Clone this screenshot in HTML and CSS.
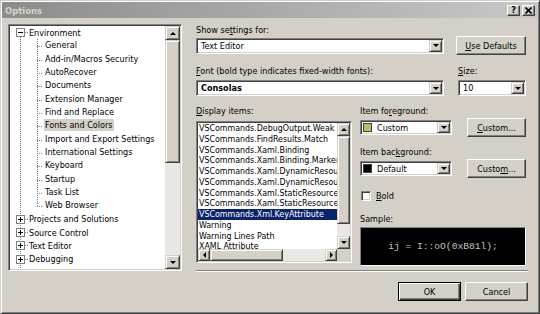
FILE: index.html
```html
<!DOCTYPE html>
<html lang="en">
<head>
    <meta charset="UTF-8">
    <title>Options</title>
    <link rel="stylesheet" href="styles.css">
</head>
<body>

<div class="window">
    <div class="titlebar">
        <span class="title">Options</span>
        <span class="cap-btn help">?</span>
        <span class="cap-btn close">
            <svg width="7" height="7" viewBox="0 0 7 7"><path d="M0.5 0.5L6.5 6.5M6.5 0.5L0.5 6.5" stroke="#000" stroke-width="1.6"/></svg>
        </span>
    </div>

    <div class="main">
        <!-- category tree -->
        <div class="tree sunken">
            <div class="tree-items">
                <div class="root">
                    <svg class="exp" width="9" height="9"><rect x="0.5" y="0.5" width="8" height="8" fill="#fff" stroke="#808080"/><path d="M2 4.5h5" stroke="#000"/></svg>
                    <span class="tick"></span><span>Environment</span>
                </div>
                <div class="children">
                    <div class="leaf">General</div>
                    <div class="leaf">Add-in/Macros Security</div>
                    <div class="leaf">AutoRecover</div>
                    <div class="leaf">Documents</div>
                    <div class="leaf">Extension Manager</div>
                    <div class="leaf">Find and Replace</div>
                    <div class="leaf"><span class="picked">Fonts and Colors</span></div>
                    <div class="leaf">Import and Export Settings</div>
                    <div class="leaf">International Settings</div>
                    <div class="leaf">Keyboard</div>
                    <div class="leaf">Startup</div>
                    <div class="leaf">Task List</div>
                    <div class="leaf">Web Browser</div>
                </div>
                <div class="root">
                    <svg class="exp" width="9" height="9"><rect x="0.5" y="0.5" width="8" height="8" fill="#fff" stroke="#808080"/><path d="M2 4.5h5M4.5 2v5" stroke="#000"/></svg>
                    <span class="tick"></span><span>Projects and Solutions</span>
                </div>
                <div class="root">
                    <svg class="exp" width="9" height="9"><rect x="0.5" y="0.5" width="8" height="8" fill="#fff" stroke="#808080"/><path d="M2 4.5h5M4.5 2v5" stroke="#000"/></svg>
                    <span class="tick"></span><span>Source Control</span>
                </div>
                <div class="root">
                    <svg class="exp" width="9" height="9"><rect x="0.5" y="0.5" width="8" height="8" fill="#fff" stroke="#808080"/><path d="M2 4.5h5M4.5 2v5" stroke="#000"/></svg>
                    <span class="tick"></span><span>Text Editor</span>
                </div>
                <div class="root">
                    <svg class="exp" width="9" height="9"><rect x="0.5" y="0.5" width="8" height="8" fill="#fff" stroke="#808080"/><path d="M2 4.5h5M4.5 2v5" stroke="#000"/></svg>
                    <span class="tick"></span><span>Debugging</span>
                </div>
            </div>
            <div class="vscroll tree-scroll">
                <div class="sb-btn up"></div>
                <div class="sb-thumb"></div>
                <div class="sb-track"></div>
                <div class="sb-btn down"></div>
            </div>
        </div>

        <div class="settings">
            <div class="label first">Show se<u>t</u>tings for:</div>
            <div class="row tall">
                <div class="combo wide"><span class="combo-text">Text Editor</span><span class="drop"></span></div>
                <div class="btn defaults"><u>U</u>se Defaults</div>
            </div>

            <div class="row labels">
                <div class="label font-label"><u>F</u>ont (bold type indicates fixed-width fonts):</div>
                <div class="label"><u>S</u>ize:</div>
            </div>
            <div class="row combos">
                <div class="combo wide"><span class="combo-text bold">Consolas</span><span class="drop"></span></div>
                <div class="combo size"><span class="combo-text">10</span><span class="drop"></span></div>
            </div>

            <div class="middle">
                <div class="items-col">
                    <div class="label"><u>D</u>isplay items:</div>
                    <div class="listbox sunken">
                        <div class="list-items">
                            <div>VSCommands.DebugOutput.Weak</div>
                            <div>VSCommands.FindResults.Match</div>
                            <div>VSCommands.Xaml.Binding</div>
                            <div>VSCommands.Xaml.Binding.Marker</div>
                            <div>VSCommands.Xaml.DynamicResou</div>
                            <div>VSCommands.Xaml.DynamicResou</div>
                            <div>VSCommands.Xaml.StaticResource</div>
                            <div>VSCommands.Xaml.StaticResource</div>
                            <div class="selected">VSCommands.Xml.KeyAttribute</div>
                            <div>Warning</div>
                            <div>Warning Lines Path</div>
                            <div>XAML Attribute</div>
                        </div>
                        <div class="vscroll list-vscroll">
                            <div class="sb-btn up"></div>
                            <div class="sb-thumb"></div>
                            <div class="sb-track"></div>
                            <div class="sb-btn down"></div>
                        </div>
                        <div class="hscroll">
                            <div class="sb-btn left"></div>
                            <div class="sb-thumb"></div>
                            <div class="sb-track"></div>
                            <div class="sb-btn right"></div>
                        </div>
                        <div class="corner"></div>
                    </div>
                </div>

                <div class="color-col">
                    <div class="label">Item fo<u>r</u>eground:</div>
                    <div class="row tall">
                        <div class="combo small"><span class="swatch olive"></span><span class="combo-text">Custom</span><span class="drop"></span></div>
                        <div class="btn custom"><u>C</u>ustom...</div>
                    </div>
                    <div class="label spaced">Item bac<u>k</u>ground:</div>
                    <div class="row tall">
                        <div class="combo small"><span class="swatch black"></span><span class="combo-text">Default</span><span class="drop"></span></div>
                        <div class="btn custom">Custo<u>m</u>...</div>
                    </div>
                    <div class="check-row">
                        <span class="checkbox"></span><span><u>B</u>old</span>
                    </div>
                    <div class="label sample-label">Sample:</div>
                    <div class="sample">ij = I::oO(0xB81l);</div>
                </div>
            </div>

            <div class="separator"></div>

            <div class="actions">
                <div class="btn action default">OK</div>
                <div class="btn action">Cancel</div>
            </div>
        </div>
    </div>
</div>

</body>
</html>
```

FILE: styles.css
```css
* {
    box-sizing: border-box;
}

body {
    margin: 0;
    font-family: "DejaVu Sans Condensed", "DejaVu Sans", sans-serif;
    font-stretch: condensed;
    font-size: 9px;
    color: #000;
}

u {
    text-decoration-thickness: 1px;
    text-underline-offset: 1px;
}

.window {
    width: 540px;
    height: 314px;
    background-color: #d4d0c8; /* classic dialog gray */
    border: 1px solid;
    border-color: #d4d0c8 #404040 #404040 #d4d0c8;
    padding: 1px;
    box-shadow: inset 1px 1px #fff, inset -1px -1px #808080;
}

/* title bar (inactive) */
.titlebar {
    height: 16px;
    display: flex;
    align-items: center;
    padding: 0 3px 0 3px;
    background: linear-gradient(to right, #8c8c8c, #c8c8c8);
}

.title {
    font-weight: bold;
    color: #d8d4cc;
    font-size: 9.4px;
}

.cap-btn {
    width: 13px;
    height: 11px;
    display: flex;
    justify-content: center;
    align-items: center;
    background-color: #d4d0c8;
    border: 1px solid;
    border-color: #fff #404040 #404040 #fff;
    box-shadow: inset -1px -1px #808080;
    font-weight: bold;
    font-size: 9px;
    line-height: 9px;
}

.cap-btn.help {
    margin-left: auto;
}

.cap-btn.close {
    margin-left: 2px;
}

.main {
    display: flex;
    padding: 6px 0 0 6px;
}

.sunken {
    border: 1px solid;
    border-color: #808080 #fff #fff #808080;
    padding: 1px;
    box-shadow: inset 1px 1px #404040, inset -1px -1px #d4d0c8;
    background-color: #fff;
}

/* tree */
.tree {
    width: 174px;
    height: 247px;
    display: flex;
}

.tree-items {
    flex: 1;
    overflow: hidden;
    white-space: nowrap;
    background-image: repeating-linear-gradient(#808080 0 1px, transparent 1px 2px);
    background-size: 1px 100%;
    background-position: 10px 7px;
    background-repeat: no-repeat;
}

.root {
    height: 13.33px;
    display: flex;
    align-items: center;
}

.exp {
    margin-left: 6px;
    flex-shrink: 0;
}

.tick {
    width: 3px;
    height: 1px;
    margin-right: 1px;
    background-image: repeating-linear-gradient(to right, #808080 0 1px, transparent 1px 2px);
}

.children {
    background-image: repeating-linear-gradient(#808080 0 1px, transparent 1px 2px);
    background-size: 1px calc(100% - 6px);
    background-position: 27px 0;
    background-repeat: no-repeat;
}

.leaf {
    height: 13.33px;
    line-height: 13.33px;
    padding-left: 35px;
    background-image: repeating-linear-gradient(to right, #808080 0 1px, transparent 1px 2px);
    background-size: 6px 1px;
    background-position: 27px 7px;
    background-repeat: no-repeat;
}

.picked {
    background-color: #d4d0c8;
    padding: 1px 1px;
    margin-left: -1px;
}

/* scrollbars */
.vscroll {
    display: flex;
    flex-direction: column;
}

.tree-scroll {
    width: 15px;
}

.sb-btn,
.sb-thumb {
    background-color: #d4d0c8;
    border: 1px solid;
    border-color: #d4d0c8 #404040 #404040 #d4d0c8;
    box-shadow: inset 1px 1px #fff, inset -1px -1px #808080;
    display: flex;
    justify-content: center;
    align-items: center;
    flex-shrink: 0;
}

.sb-track {
    flex: 1;
    background-color: #eae8e4;
}

.tree-scroll .sb-btn {
    height: 14px;
}

.tree-scroll .sb-thumb {
    height: 123px;
}

.up::after,
.down::after,
.drop::after {
    content: "";
    border: solid transparent;
}

.up::after {
    border-width: 0 3px 3px;
    border-bottom-color: #000;
}

.down::after,
.drop::after {
    border-width: 3px 3px 0;
    border-top-color: #000;
}

.left::after,
.right::after {
    content: "";
    border: solid transparent;
}

.left::after {
    border-width: 3px 3px 3px 0;
    border-right-color: #000;
}

.right::after {
    border-width: 3px 0 3px 3px;
    border-left-color: #000;
}

/* right side */
.settings {
    width: 330px;
    margin-left: 14px;
}

.label {
    height: 11px;
    line-height: 11px;
    white-space: nowrap;
}

.label.first {
    margin-top: 1px;
}

.row {
    display: flex;
    align-items: center;
    justify-content: space-between;
}

.row.tall {
    height: 19px;
}

.row.labels {
    margin-top: 11px;
    justify-content: flex-start;
}

.font-label {
    width: 262px;
}

.row.combos {
    margin-top: 3px;
}

.combo {
    height: 16px;
    display: flex;
    border: 1px solid;
    border-color: #808080 #fff #fff #808080;
    padding: 1px;
    box-shadow: inset 1px 1px #404040, inset -1px -1px #d4d0c8;
    background-color: #fff;
}

.combo.wide {
    width: 248px;
}

.combo.size {
    width: 68px;
}

.combo.small {
    width: 92px;
    height: 15px;
    align-items: center;
}

.combo-text {
    flex: 1;
    padding-left: 3px;
    line-height: 12px;
    white-space: nowrap;
}

.combo-text.bold {
    font-weight: bold;
}

.combo.small .combo-text {
    padding-left: 0;
}

.drop {
    width: 13px;
    background-color: #d4d0c8;
    border: 1px solid;
    border-color: #d4d0c8 #404040 #404040 #d4d0c8;
    box-shadow: inset 1px 1px #fff, inset -1px -1px #808080;
    display: flex;
    justify-content: center;
    align-items: center;
    align-self: stretch;
}

.swatch {
    width: 9px;
    height: 9px;
    margin: 0 5px 0 1px;
    border: 1px solid #404040;
}

.swatch.olive {
    background-color: #b5bf6f;
}

.swatch.black {
    background-color: #000;
}

.btn {
    height: 19px;
    display: flex;
    justify-content: center;
    align-items: center;
    background-color: #d4d0c8;
    border: 1px solid;
    border-color: #fff #404040 #404040 #fff;
    box-shadow: inset -1px -1px #808080;
}

.btn.defaults {
    width: 70px;
}

.btn.custom {
    width: 59px;
}

.middle {
    display: flex;
}

.items-col .label,
.color-col > .label:first-child {
    margin-top: 10px;
}

.listbox {
    width: 156px;
    height: 142px;
    margin-top: 4px;
    display: grid;
    grid-template-columns: 1fr 13px;
    grid-template-rows: 1fr 12px;
}

.list-items {
    overflow: hidden;
    white-space: nowrap;
    font-size: 8.8px;
}

.list-items div {
    height: 10.75px;
    line-height: 10.75px;
    padding-left: 1px;
}

.list-items .selected {
    background-color: #0a246a; /* selection navy */
    color: #fff;
}

.list-vscroll .sb-btn {
    height: 13px;
}

.list-vscroll .sb-thumb {
    height: 88px;
}

.hscroll {
    display: flex;
}

.hscroll .sb-btn {
    width: 12px;
}

.hscroll .sb-thumb {
    width: 73px;
}

.corner {
    background-color: #d4d0c8;
}

.color-col {
    width: 166px;
    margin-left: 8px;
}

.color-col .row.tall {
    margin-top: 1px;
}

.label.spaced {
    margin-top: 10px;
}

.check-row {
    height: 11px;
    margin-top: 12px;
    display: flex;
    align-items: center;
    gap: 5px;
    padding-left: 1px;
}

.checkbox {
    width: 10px;
    height: 10px;
    border: 1px solid;
    border-color: #808080 #fff #fff #808080;
    box-shadow: inset 1px 1px #404040, inset -1px -1px #d4d0c8;
    background-color: #fff;
}

.sample-label {
    margin-top: 13px;
}

.sample {
    height: 39px;
    margin-top: 2px;
    background-color: #000;
    border: 1px solid;
    border-color: #808080 #fff #fff #808080;
    display: flex;
    justify-content: center;
    align-items: center;
    font-family: "Liberation Mono", monospace;
    font-size: 9.6px;
    color: #c4c4bc;
    white-space: pre;
}

.separator {
    width: 332px;
    height: 2px;
    margin-top: 4px;
    border-top: 1px solid #808080;
    border-bottom: 1px solid #fff;
}

.actions {
    width: 332px;
    margin-top: 10px;
    display: flex;
    justify-content: flex-end;
    gap: 4px;
}

.btn.action {
    width: 63px;
}

.btn.default {
    border: 1px solid #000;
    box-shadow: inset 1px 1px #fff, inset -1px -1px #404040, inset -2px -2px #808080;
}
```
